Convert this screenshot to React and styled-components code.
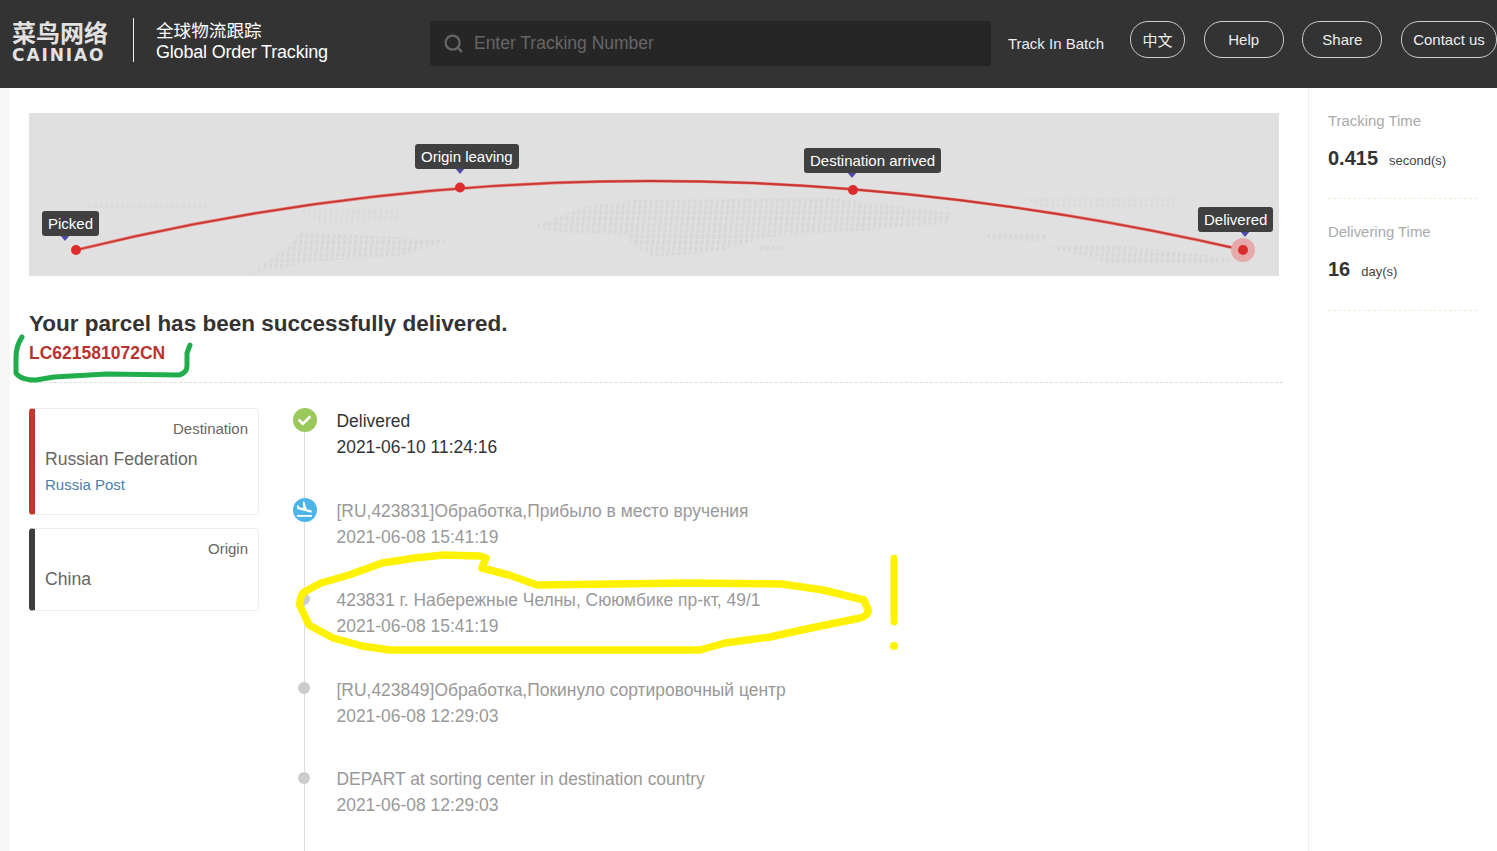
import React from "react";
import styled, { createGlobalStyle } from "styled-components";
import { Search } from "lucide-react";
import { MdFlightLand } from "react-icons/md";
import { FaCheck } from "react-icons/fa";

const GlobalStyle = createGlobalStyle`
  html, body {
    margin: 0;
    padding: 0;
    background: #fff;
  }
  body {
    font-family: "Liberation Sans", "Noto Sans CJK SC", Arial, sans-serif;
    color: #333;
  }
`;

const Page = styled.div`
  position: relative;
  width: 1497px;
  height: 851px;
  overflow: hidden;
  display: flex;
  flex-direction: column;
`;

const Header = styled.header`
  flex: none;
  height: 88px;
  background: #333;
  display: flex;
  align-items: center;
  padding-left: 12px;
  color: #fff;
`;

const Logo = styled.div`
  width: 96px;
  display: flex;
  flex-direction: column;
  color: #e2e2e2;
  margin-bottom: 3px;
`;

const LogoCn = styled.span`
  font-family: "Noto Sans CJK SC", sans-serif;
  font-weight: 700;
  font-size: 24px;
  line-height: 23px;
  white-space: nowrap;
`;

const LogoEn = styled.span`
  font-family: "DejaVu Sans", sans-serif;
  font-weight: 700;
  font-size: 17px;
  line-height: 20px;
  letter-spacing: 1.9px;
  margin-top: 2px;
  white-space: nowrap;
`;

const HeaderRule = styled.div`
  width: 1px;
  height: 44px;
  background: #eee;
  margin: 0 22px 8px 25px;
`;

const Title = styled.div`
  width: 274px;
  display: flex;
  flex-direction: column;
  margin-bottom: 6px;
`;

const TitleCn = styled.span`
  font-family: "Noto Sans CJK SC", sans-serif;
  font-size: 17.6px;
  line-height: 22px;
`;

const TitleEn = styled.span`
  font-size: 18px;
  line-height: 22px;
  letter-spacing: -0.2px;
  white-space: nowrap;
`;

const SearchBox = styled.div`
  width: 561px;
  height: 45px;
  box-sizing: border-box;
  background: #262626;
  border-radius: 3px;
  display: flex;
  align-items: center;
  gap: 10px;
  padding-left: 13px;
  color: #666;
  font-size: 17.5px;
  margin-bottom: 1px;
`;

const BatchLink = styled.a`
  margin: 0 26px 2px 17px;
  font-size: 15px;
  color: #eee;
  white-space: nowrap;
`;

const Nav = styled.nav`
  display: flex;
  gap: 18.67px;
  margin-bottom: 9px;
`;

const NavButton = styled.button`
  width: ${(p) => p.$w}px;
  height: 37px;
  padding: 0;
  border: 1px solid #ccc;
  border-radius: 18px;
  background: transparent;
  color: #eee;
  font-family: inherit;
  font-size: 15px;
  white-space: nowrap;
`;

const Body = styled.div`
  flex: 1;
  min-height: 0;
  display: flex;
`;

const EdgeStrip = styled.div`
  width: 10px;
  background: #f7f7f7;
`;

const Main = styled.main`
  width: 1298px;
  box-sizing: border-box;
  padding: 25px 0 0 19px;
`;

const RouteMap = styled.div`
  position: relative;
  width: 1250px;
  height: 163px;
  background: #e0e0e0;
`;

const RouteArt = styled.svg`
  display: block;
  width: 100%;
  height: 100%;
`;

const Tag = styled.div`
  position: absolute;
  left: ${(p) => p.$x}px;
  top: ${(p) => p.$y}px;
  height: 25px;
  padding: 0 6px;
  border-radius: 3px;
  background: #404040;
  color: #fff;
  font-size: 15px;
  line-height: 25px;
  white-space: nowrap;
`;

const Heading = styled.h1`
  margin: 33px 0 0;
  font-size: 22.5px;
  line-height: 30px;
  font-weight: 700;
  color: #333;
`;

const TrackingNumber = styled.div`
  margin-top: 3px;
  font-size: 17.5px;
  line-height: 22px;
  font-weight: 700;
  color: #b8332f;
`;

const DashedRule = styled.div`
  width: 1254px;
  margin-top: 18px;
  border-top: 1px dashed #ddd;
`;

const Content = styled.div`
  margin-top: 25px;
  display: flex;
  gap: 33.5px;
`;

const Cards = styled.div`
  width: 230px;
  display: flex;
  flex-direction: column;
  gap: 13px;
`;

const Card = styled.div`
  height: ${(p) => p.$h}px;
  box-sizing: border-box;
  border: 1px solid #eee;
  border-left: 6px solid ${(p) => p.$accent};
  border-radius: 4px;
  padding: 10px 10px 0 10px;
`;

const CardLabel = styled.div`
  text-align: right;
  font-size: 15px;
  line-height: 20px;
  color: #666;
`;

const CardName = styled.div`
  margin-top: 9px;
  font-size: 17.6px;
  line-height: 22px;
  color: #666;
`;

const CardLink = styled.a`
  display: block;
  margin-top: 5px;
  font-size: 15px;
  line-height: 20px;
  color: #4a80b0;
`;

const Timeline = styled.div`
  display: flex;
  flex-direction: column;
`;

const Item = styled.div`
  height: 89.5px;
  display: flex;
  gap: 20px;
`;

const Marker = styled.div`
  flex: none;
  width: 24px;
  display: flex;
  justify-content: center;
  align-items: flex-start;
  background: linear-gradient(#ddd, #ddd) center / 1px 100% no-repeat;
`;

const RoundIcon = styled.div`
  width: 24px;
  height: 24px;
  border-radius: 50%;
  background: ${(p) => p.$color};
  color: #fff;
  display: flex;
  align-items: center;
  justify-content: center;
  font-size: ${(p) => p.$size}px;
`;

const Dot = styled.div`
  width: 12px;
  height: 12px;
  margin: 5.5px 1px 0 0;
  border-radius: 50%;
  background: #ccc;
`;

const ItemText = styled.div`
  font-size: 17.45px;
  line-height: 26px;
  color: ${(p) => (p.$current ? "#333" : "#999")};
  white-space: nowrap;
`;

const Aside = styled.aside`
  flex: 1;
  box-sizing: border-box;
  border-left: 1px solid #eee;
  padding: 0 20px 0 19px;
`;

const Stat = styled.div`
  height: ${(p) => p.$h}px;
  box-sizing: border-box;
  padding-top: 23px;
  border-bottom: 1px dashed #f1ecd6;
`;

const StatLabel = styled.div`
  font-size: 14.9px;
  line-height: 20px;
  color: #aaa;
`;

const StatValue = styled.div`
  margin-top: 15px;
  display: flex;
  align-items: baseline;
  gap: 11px;
  font-size: 13px;
  line-height: 24px;
  color: #444;
`;

const StatNumber = styled.b`
  font-size: 20px;
  color: #333;
`;

const Scribbles = styled.svg`
  position: absolute;
  left: 0;
  top: 0;
  pointer-events: none;
`;

const tags = [
  { label: "Picked", x: 13, y: 98 },
  { label: "Origin leaving", x: 386, y: 31 },
  { label: "Destination arrived", x: 775, y: 35 },
  { label: "Delivered", x: 1169, y: 94 },
];

const pins = [
  { x: 65, y: 236 },
  { x: 460, y: 169 },
  { x: 852, y: 173 },
  { x: 1245, y: 232 },
];

const stops = [
  { x: 76, y: 250 },
  { x: 460, y: 187.5 },
  { x: 853, y: 190 },
  { x: 1243, y: 250 },
];

// the faint dotted world map behind the route
const landFaint = [
  "83,203 207,202 210,208 90,208",
  "299,208 402,207 398,222 320,224",
  "1023,198 1180,197 1175,207 1040,207",
];

const landDark = [
  "533,227 583,207 633,200 833,198 950,213 950,223 867,230 767,237 717,252 653,257 633,245 627,235 567,233",
  "300,232 448,240 400,256 310,262 250,274 290,245",
  "1048,247 1120,245 1230,258 1225,264 1110,263",
  "982,233 1048,235 1045,241 990,240",
  "758,245 783,245 783,250 758,250",
];

const events = [
  { text: "Delivered", time: "2021-06-10 11:24:16", kind: "done" },
  { text: "[RU,423831]Обработка,Прибыло в место вручения", time: "2021-06-08 15:41:19", kind: "land" },
  { text: "423831 г. Набережные Челны, Сююмбике пр-кт, 49/1", time: "2021-06-08 15:41:19" },
  { text: "[RU,423849]Обработка,Покинуло сортировочный центр", time: "2021-06-08 12:29:03" },
  { text: "DEPART at sorting center in destination country", time: "2021-06-08 12:29:03" },
];

const yellowLoop =
  "M486 558 L480 556 L443 555 L415 558 L382 563 L349 575 L321 583 L304 592 Q299 598 300 606 L309 625 L333 638 L362 646 L390 650 L700 650 L725 643 L770 637 L811 628 L860 618 Q869 615 868 610 L864 600 L823 590 L782 584 L688 583 L537 585 L509 575 L482 568 Z";

const greenHook =
  "M22 337 Q16 346 16 357 L16 373 Q20 380 36 380 L54 377 L107 374 L179 375 Q187 373 187 366 L187 353 L190 345";

const RouteGraphic = () => (
  <RouteArt viewBox="29 113 1250 163">
    <defs>
      <pattern id="land" width="5.5" height="6" patternUnits="userSpaceOnUse" patternTransform="skewX(-6)">
        <rect width="3" height="5" fill="#d4d4d4" />
      </pattern>
      <filter id="soft">
        <feGaussianBlur stdDeviation="0.6" />
      </filter>
    </defs>
    <g fill="url(#land)" filter="url(#soft)">
      {landFaint.map((points) => (
        <polygon key={points} points={points} opacity="0.4" />
      ))}
      {landDark.map((points) => (
        <polygon key={points} points={points} opacity="0.8" />
      ))}
    </g>
    <path d="M76 250 Q640 112 1243 250" fill="none" stroke="#e8827c" strokeWidth="3.2" />
    <path d="M76 250 Q640 112 1243 250" fill="none" stroke="#c93733" strokeWidth="1.8" />
    <circle cx="1243" cy="250" r="12" fill="#e4a9a8" />
    {stops.map((s) => (
      <circle key={s.x} cx={s.x} cy={s.y} r="5" fill="#dd2c2c" />
    ))}
    {pins.map((p) => (
      <polygon
        key={p.x}
        points={`${p.x - 5},${p.y - 1} ${p.x + 5},${p.y - 1} ${p.x},${p.y + 5}`}
        fill="#4f4ba8"
      />
    ))}
  </RouteArt>
);

export default function App() {
  return (
    <Page>
      <GlobalStyle />
      <Header>
        <Logo>
          <LogoCn>菜鸟网络</LogoCn>
          <LogoEn>CAINIAO</LogoEn>
        </Logo>
        <HeaderRule />
        <Title>
          <TitleCn>全球物流跟踪</TitleCn>
          <TitleEn>Global Order Tracking</TitleEn>
        </Title>
        <SearchBox>
          <Search size={21} strokeWidth={2.6} />
          Enter Tracking Number
        </SearchBox>
        <BatchLink>Track In Batch</BatchLink>
        <Nav>
          <NavButton $w={55}>中文</NavButton>
          <NavButton $w={80}>Help</NavButton>
          <NavButton $w={80}>Share</NavButton>
          <NavButton $w={96}>Contact us</NavButton>
        </Nav>
      </Header>
      <Body>
        <EdgeStrip />
        <Main>
          <RouteMap>
            <RouteGraphic />
            {tags.map((t) => (
              <Tag key={t.label} $x={t.x} $y={t.y}>
                {t.label}
              </Tag>
            ))}
          </RouteMap>
          <Heading>Your parcel has been successfully delivered.</Heading>
          <TrackingNumber>LC621581072CN</TrackingNumber>
          <DashedRule />
          <Content>
            <Cards>
              <Card $h={107} $accent="#c4352f">
                <CardLabel>Destination</CardLabel>
                <CardName>Russian Federation</CardName>
                <CardLink>Russia Post</CardLink>
              </Card>
              <Card $h={83} $accent="#3d3d3d">
                <CardLabel>Origin</CardLabel>
                <CardName>China</CardName>
              </Card>
            </Cards>
            <Timeline>
              {events.map((e) => (
                <Item key={e.text}>
                  <Marker>
                    {e.kind === "done" && (
                      <RoundIcon $color="#9bc85b" $size={13}>
                        <FaCheck />
                      </RoundIcon>
                    )}
                    {e.kind === "land" && (
                      <RoundIcon $color="#4db4ea" $size={19}>
                        <MdFlightLand />
                      </RoundIcon>
                    )}
                    {!e.kind && <Dot />}
                  </Marker>
                  <ItemText $current={e.kind === "done"}>
                    {e.text}
                    <br />
                    {e.time}
                  </ItemText>
                </Item>
              ))}
            </Timeline>
          </Content>
        </Main>
        <Aside>
          <Stat $h={111}>
            <StatLabel>Tracking Time</StatLabel>
            <StatValue>
              <StatNumber>0.415</StatNumber> second(s)
            </StatValue>
          </Stat>
          <Stat $h={112}>
            <StatLabel>Delivering Time</StatLabel>
            <StatValue>
              <StatNumber>16</StatNumber> day(s)
            </StatValue>
          </Stat>
        </Aside>
      </Body>
      <Scribbles width="1497" height="851" viewBox="0 0 1497 851">
        <path d={greenHook} fill="none" stroke="#1fae4b" strokeWidth="5" strokeLinecap="round" strokeLinejoin="round" />
        <path d={yellowLoop} fill="none" stroke="#fff200" strokeWidth="7.5" strokeLinejoin="round" />
        <path d="M894 558 L894 622" stroke="#fff200" strokeWidth="7" strokeLinecap="round" />
        <circle cx="894" cy="646" r="4" fill="#fff200" />
      </Scribbles>
    </Page>
  );
}
